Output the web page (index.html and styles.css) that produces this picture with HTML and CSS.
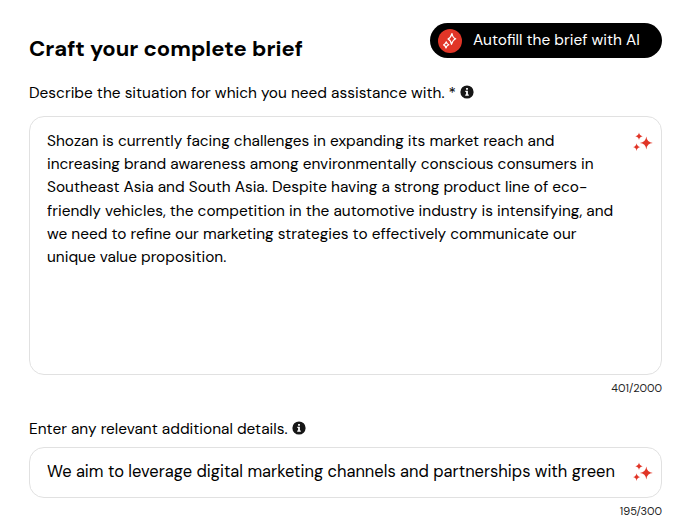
FILE: index.html
```html
<!DOCTYPE html>
<html lang="en">
<head>
  <meta charset="UTF-8" />
  <meta name="viewport" content="width=device-width, initial-scale=1.0" />
  <title>Craft your complete brief</title>
  <link rel="stylesheet" href="styles.css">
</head>
<body>
  <svg class="symbols" aria-hidden="true">
    <symbol id="sparkles" viewBox="0 0 20 20">
      <path d="M13.3 4.6Q13.9 10.500 19.8 11Q13.9 11.5 13.3 17.4Q12.7 11.5 6.8 11Q12.7 10.5 13.3 4.6Z" />
      <path d="M6 .5Q6.5 3.7 9.7 4.2Q6.5 4.7 6 7.9Q5.5 4.7 2.3 4.2Q5.5 3.7 6 .5Z" />
      <path d="M3.6 11.3Q4.1 14.6 7.3 15.1Q4.1 15.6 3.6 18.9Q3.1 15.6 0 15.1Q3.1 14.6 3.6 11.3Z" />
    </symbol>
    <symbol id="info" viewBox="0 0 14 14">
      <circle cx="7" cy="7" r="6.6" fill="#161616" />
      <path d="M6.1 3.1h1.8v1.7H6.1zM5.3 5.8h2.6v3.7h.9v1.2H5.2V9.5h.9V7h-.8z" fill="#fff" />
    </symbol>
  </svg>

  <main class="brief">
    <header class="brief-header">
      <h1>Craft your complete brief</h1>
      <button class="autofill" type="button">
        <span class="autofill-icon">
          <svg viewBox="0 0 24 24">
            <path d="M14 4.5Q14.7 8.7 17.7 9.8Q14.7 11 13.5 15.3Q12.7 11.2 10 10Q12.7 8.8 14 4.5Z" />
            <path d="M8.3 12.8Q8.7 15 10.8 15.8Q8.7 16.5 8 19Q7.5 16.7 5.6 15.9Q7.5 15.1 8.3 12.8Z" />
          </svg>
        </span>
        <span class="autofill-text">Autofill the brief with AI</span>
      </button>
    </header>

    <section class="field">
      <label class="situation-label" for="situation"><span>Describe the situation for which you need assistance with. *</span>
        <svg class="info"><use href="#info" /></svg>
      </label>
      <div class="box">
        <textarea id="situation" spellcheck="false">Shozan is currently facing challenges in expanding its market reach and
increasing brand awareness among environmentally conscious consumers in
Southeast Asia and South Asia. Despite having a strong product line of eco-
friendly vehicles, the competition in the automotive industry is intensifying, and
we need to refine our marketing strategies to effectively communicate our
unique value proposition.</textarea>
        <svg class="sparkles"><use href="#sparkles" /></svg>
      </div>
      <div class="count">401/2000</div>
    </section>

    <section class="field">
      <label class="details-label" for="details"><span>Enter any relevant additional details.</span>
        <svg class="info"><use href="#info" /></svg>
      </label>
      <div class="box box-small">
        <input id="details" type="text" value="We aim to leverage digital marketing channels and partnerships with green">
        <svg class="sparkles"><use href="#sparkles" /></svg>
      </div>
      <div class="count">195/300</div>
    </section>
  </main>
</body>
</html>
```

FILE: styles.css
```css
* {
  box-sizing: border-box;
}
body {
  margin: 0;
  background: #fff;
  color: #000;
  font-family: "DM Sans", Inter, sans-serif;
  font-size: 15.43px;
  font-optical-sizing: none;
}
.symbols {
  display: none;
}
.brief {
  padding: 23px 30px 0 29px;
}
.brief-header {
  display: flex;
  justify-content: space-between;
  height: 35px;
}
h1 {
  margin: 12px 0 0;
  font-size: 22px;
  line-height: 28px;
  font-weight: 700;
}
.autofill {
  display: flex;
  align-items: center;
  gap: 11px;
  width: 232px;
  height: 35px;
  padding: 0 8px;
  border: 0;
  border-radius: 18px;
  background: #000;
  color: #fff;
  font: inherit;
  font-optical-sizing: none;
  white-space: nowrap;
}
.autofill-icon {
  width: 24px;
  height: 24px;
  border-radius: 50%;
  background: #e13527;
}
.autofill-text {
  margin-top: -2px;
}
.autofill-icon svg {
  display: block;
  fill: none;
  stroke: #fff;
  stroke-width: 1.2;
  stroke-linejoin: round;
}
label {
  display: flex;
  align-items: center;
  gap: 4px;
  height: 20px;
  white-space: nowrap;
}
.situation-label {
  margin: 25px 0 13px;
}
.details-label {
  margin: 24px 0 8px;
}
.info {
  width: 14px;
  height: 14px;
  margin-top: -3px;
}
.box {
  display: flex;
  width: 633px;
  height: 259px;
  padding: 13px 8.5px 0 17px;
  border: 1px solid #e1e1e1;
  border-radius: 15px;
}
.box-small {
  height: 51px;
}
textarea,
input {
  flex: 1;
  min-width: 0;
  padding: 0;
  border: 0;
  outline: 0;
  background: none;
  color: #000;
  font: inherit;
  font-optical-sizing: none;
}
textarea {
  height: 220px;
  line-height: 23.2px;
  resize: none;
  overflow: hidden;
  white-space: pre;
}
input {
  height: 22px;
  margin-top: -1px;
  font-size: 16.5px;
}
.sparkles {
  flex: none;
  width: 20px;
  height: 20px;
  margin-top: 2px;
  fill: #e13527;
}
.box-small .sparkles {
  margin-top: 1px;
}
.count {
  height: 14px;
  margin-top: 6px;
  font-size: 11px;
  line-height: 14px;
  text-align: right;
  color: #222;
}
```
